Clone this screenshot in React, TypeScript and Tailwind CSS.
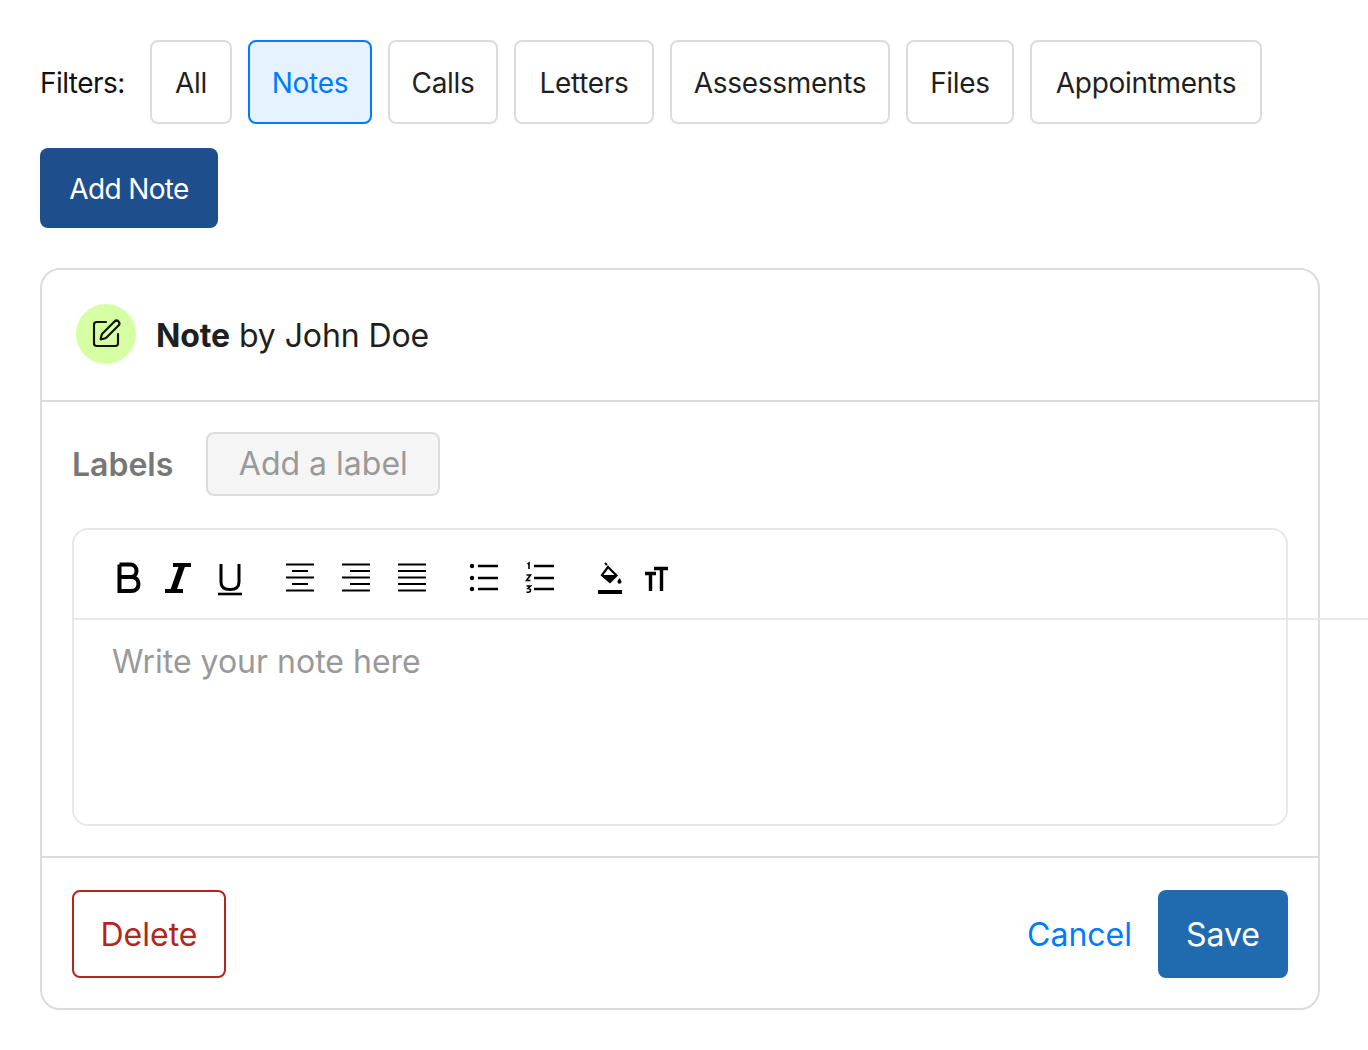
import { SquarePen } from "lucide-react";

const filters = [
  { label: "All", width: "w-[82px]" },
  { label: "Notes", width: "w-[124px]" },
  { label: "Calls", width: "w-[110px]" },
  { label: "Letters", width: "w-[140px]" },
  { label: "Assessments", width: "w-[220px]" },
  { label: "Files", width: "w-[108px]" },
  { label: "Appointments", width: "w-[232px]" },
];

function ToolIcon({ children, width = 32 }: { children: React.ReactNode; width?: number }) {
  return (
    <svg width={width} height={36} viewBox={`0 0 ${width} 36`} fill="none" stroke="#000" strokeWidth="2" className="block shrink-0">
      {children}
    </svg>
  );
}

function Toolbar() {
  return (
    <div className="flex h-[90px] w-[1294px] shrink-0 items-center border-b-2 border-[#e8e8e8] pt-[8px] pl-[40px]">
      <div className="flex items-center">
        {/* B */}
        <ToolIcon>
          <path d="M5.5 4.5V31H17C22 31 24.5 28 24.5 24C24.5 20 22 17 17 17H5.5M16.5 17C20 17 22.5 15 22.5 11C22.5 7 20 4.5 16.5 4.5H5.5" strokeWidth="4" />
        </ToolIcon>
        {/* I */}
        <div className="ml-[16px]">
          <ToolIcon>
            <path d="M11 5H29M3 31H21" strokeWidth="3.8" />
            <path d="M20 6L11.5 30" strokeWidth="6" />
          </ToolIcon>
        </div>
        {/* U */}
        <div className="ml-[20px]">
          <ToolIcon>
            <path d="M7 4V22C7 27 10 29.5 16 29.5C22 29.5 25 27 25 22V4" strokeWidth="3" />
            <path d="M4 34H28" strokeWidth="2.6" />
          </ToolIcon>
        </div>
      </div>
      <div className="ml-[38px] flex items-center gap-[24px]">
        <ToolIcon>
          <path d="M2 4.5H30M8 11H24M2 17.5H30M8 24H24M2 30.5H30" strokeWidth="2.2" />
        </ToolIcon>
        <ToolIcon>
          <path d="M2 4.5H30M10 11H30M2 17.5H30M10 24H30M2 30.5H30" strokeWidth="2.2" />
        </ToolIcon>
        <ToolIcon>
          <path d="M2 4.5H30M2 11H30M2 17.5H30M2 24H30M2 30.5H30" strokeWidth="2.2" />
        </ToolIcon>
      </div>
      <div className="ml-[40px] flex items-center gap-[24px]">
        <ToolIcon>
          <circle cx="4" cy="6" r="2.2" fill="#000" stroke="none" />
          <circle cx="4" cy="18" r="2.2" fill="#000" stroke="none" />
          <circle cx="4" cy="29" r="2.2" fill="#000" stroke="none" />
          <path d="M10 6H30M10 18H30M10 29H30" strokeWidth="2.4" />
        </ToolIcon>
        <ToolIcon>
          <path d="M3.5 4L5 3V9" strokeWidth="1.6" />
          <path d="M2.5 15H6.5L2.5 20.5H6.5" strokeWidth="1.6" />
          <path d="M2.5 26H6.5L4 28.5C6 28.5 6.5 29.5 6.5 30.5C6.5 32 5 32.5 2.5 32" strokeWidth="1.6" />
          <path d="M10 6H30M10 18H30M10 29H30" strokeWidth="2.4" />
        </ToolIcon>
      </div>
      <div className="ml-[40px] flex items-center gap-[20px]">
        <svg width="28" height="36" viewBox="0 0 28 36" fill="none" className="block shrink-0">
          <path d="M9 3L11 5" stroke="#000" strokeWidth="2" />
          <path d="M12 7L20.5 15.5L14 22L6 15Z" stroke="#000" strokeWidth="2.2" fill="#fff" />
          <path d="M6 15.5H20.5L14 22Z" fill="#000" stroke="#000" />
          <path d="M23.5 18C24.7 19.8 25.5 20.7 25.5 21.8C25.5 23 24.6 23.8 23.5 23.8C22.4 23.8 21.5 23 21.5 21.8C21.5 20.7 22.3 19.8 23.5 18Z" fill="#000" />
          <rect x="2" y="30" width="24" height="4" fill="#000" />
        </svg>
        <svg width="24" height="36" viewBox="0 0 24 36" fill="none" stroke="#000" strokeWidth="3.4" className="block shrink-0">
          <path d="M1 13.5H12M6.5 13V31" />
          <path d="M10 8.5H24M17.5 8V31" />
        </svg>
      </div>
    </div>
  );
}

export default function App() {
  return (
    <main className="h-[1050px] w-[1368px] overflow-hidden bg-white p-[40px] font-['Inter',sans-serif] text-[#1f1f1f]">
      <div className="flex flex-wrap items-center gap-x-[16px] gap-y-[24px]">
        <span className="mr-[8px] w-[86px] pt-[1px] text-[28px] tracking-[-0.55px] text-[#111]">Filters:</span>
        {filters.map((filter) => (
          <button
            key={filter.label}
            className={`h-[84px] rounded-[8px] border-2 pt-[1px] text-[28px] tracking-[-0.3px] ${filter.width} ${
              filter.label === "Notes" ? "border-[#007bff] bg-[#e6f2ff] text-[#007bff]" : "border-[#dcdcdc] bg-white"
            }`}
          >
            {filter.label}
          </button>
        ))}
        <button className="h-[80px] w-[178px] rounded-[8px] bg-[#1f4e8c] pt-[1px] text-[28px] tracking-[-0.65px] text-white">Add Note</button>
      </div>

      <section className="mt-[40px] w-[1280px] rounded-[20px] border-2 border-[#dcdcdc]">
        <div className="flex h-[132px] items-center gap-[20px] border-b-2 border-[#dcdcdc] px-[34px] pb-[2px]">
          <div className="flex size-[60px] items-center justify-center rounded-full bg-[#d6ffa3]">
            <SquarePen size={32} strokeWidth={1.6} color="#111" />
          </div>
          <p className="pt-[3px] text-[32px] tracking-[-0.1px]">
            <strong className="font-bold">Note</strong> by John Doe
          </p>
        </div>

        <div className="flex flex-col gap-[32px] border-b-2 border-[#dcdcdc] px-[30px] py-[30px]">
          <div className="flex items-center gap-[33px]">
            <span className="pt-[2px] text-[32px] font-semibold text-[#777]">Labels</span>
            <div className="flex h-[64px] w-[234px] items-center justify-center rounded-[8px] border-2 border-[#dcdcdc] bg-[#f5f5f5] text-[32px] text-[#999]">
              Add a label
            </div>
          </div>
          <div className="h-[298px] rounded-[16px] border-2 border-[#e8e8e8]">
            <Toolbar />
            <p className="px-[38px] pt-[18px] text-[32px] text-[#999]">Write your note here</p>
          </div>
        </div>

        <div className="flex items-center justify-between px-[30px] pt-[32px] pb-[30px]">
          <button className="h-[88px] w-[154px] rounded-[8px] border-2 border-[#b3261e] pt-[2px] text-[32px] text-[#b3261e]">Delete</button>
          <div className="flex items-center gap-[26px]">
            <button className="pt-[2px] text-[32px] text-[#007bff]">Cancel</button>
            <button className="h-[88px] w-[130px] rounded-[8px] bg-[#206bb0] pt-[2px] text-[32px] text-white">Save</button>
          </div>
        </div>
      </section>
    </main>
  );
}
